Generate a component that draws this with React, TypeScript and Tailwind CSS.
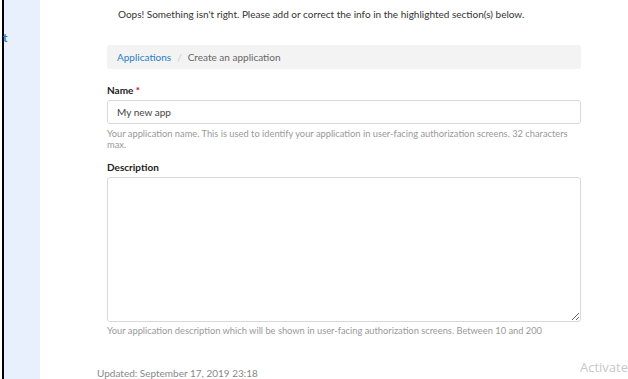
import React from 'react';

const App: React.FC = () => {
  return (
    <div className="relative flex h-[379px] w-[628px] overflow-hidden bg-white font-['Lato',sans-serif] text-[#333]">
      <div className="flex pl-[2px]">
        <div className="h-full w-[38px] border-l-2 border-black bg-[#e8f0fe] pt-[31px]">
          <span className="-ml-[1px] block text-[12px] font-bold leading-[14px] text-[#2a7fc9]">t</span>
        </div>
      </div>

      <div className="flex-1">
        <p className="ml-[78px] mt-[7px] text-[10px] leading-[14px] text-[#333]">
          Oops! Something isn't right. Please add or correct the info in the highlighted section(s) below.
        </p>

        <div className="ml-[67px] w-[474px]">
          <nav className="mt-[24px] flex h-[24px] items-center rounded-[3px] bg-[#f3f3f3] px-[10px] text-[10px]">
            <span className="text-[#2a7fc9]">Applications</span>
            <span className="mx-[6px] text-[#ccc]">/</span>
            <span className="text-[#666]">Create an application</span>
          </nav>

          <label className="mt-[15px] block text-[10px] font-bold leading-[12px] text-[#222]">
            Name <span className="text-[#d0021b]">*</span>
          </label>
          <div className="mt-[4px] flex h-[24px] items-center rounded-[3px] border border-[#d8d8d8] px-[9px] text-[10px] text-[#444]">
            My new app
          </div>
          <p className="mt-[4px] text-[9.3px] leading-[11px] text-[#999]">
            Your application name. This is used to identify your application in user-facing authorization screens. 32 characters max.
          </p>

          <label className="mt-[11px] block text-[10px] font-bold leading-[12px] text-[#222]">Description</label>
          <textarea
            readOnly
            className="mt-[4px] block h-[145px] w-full resize-y rounded-[3px] border border-[#d8d8d8] bg-white"
          />
          <p className="mt-[3px] h-[11px] overflow-hidden text-[9.3px] leading-[11px] text-[#999]">
            Your application description which will be shown in user-facing authorization screens. Between 10 and 200
          </p>
        </div>

        <p className="ml-[57px] mt-[31px] text-[10px] leading-[12px] text-[#888]">Updated: September 17, 2019 23:18</p>
      </div>

      <span className="absolute left-[580px] top-[359px] font-['Open_Sans',sans-serif] text-[13px] leading-[16px] text-[#c8c8c8]">
        Activate
      </span>
    </div>
  );
};

export default App;
